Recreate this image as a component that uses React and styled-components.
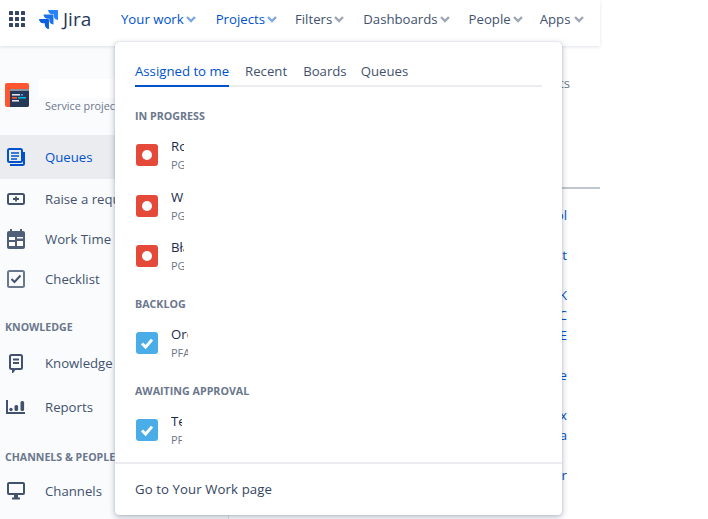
import React from "react";
import styled, { createGlobalStyle } from "styled-components";

const Global = createGlobalStyle`
  html, body { margin: 0; padding: 0; background: #fff; }
  body { font-family: "Open Sans", "Noto Sans", "Liberation Sans", sans-serif; width: 708px; height: 519px; overflow: hidden; }
  * { box-sizing: border-box; }
`;

const Page = styled.div`
  position: relative;
  width: 600px;
  height: 519px;
  display: flex;
  flex-direction: column;
`;
const Header = styled.header`
  height: 46px;
  flex: none;
  display: flex;
  align-items: center;
  padding: 0 0 8px 9px;
  background: #fff;
  box-shadow: 0 1px 3px rgba(9, 30, 66, 0.13);
  position: relative;
  z-index: 1;
`;
const Grid = styled.svg`
  width: 16px;
  height: 16px;
  flex: none;
  color: #344563;
`;
const Brand = styled.div`
  display: flex;
  align-items: center;
  gap: 5px;
  margin-left: 14px;
  width: 82px;
  flex: none;
`;
const BrandMark = styled.svg`
  width: 19px;
  height: 19px;
  flex: none;
`;
const BrandName = styled.span`
  font-size: 19px;
  color: #253858;
`;
const NavItem = styled.div`
  display: flex;
  align-items: center;
  gap: ${(p) => p.$inner || 1}px;
  font-size: 13.2px;
  color: ${(p) => (p.$active ? "#0052CC" : "#42526E")};
  margin-right: ${(p) => p.$gap}px;
  white-space: nowrap;
`;
const Chev = styled.svg`
  width: 12px;
  height: 12px;
  flex: none;
  opacity: 0.5;
`;
const Body = styled.div`
  flex: 1;
  display: flex;
  min-height: 0;
`;
const Sidebar = styled.aside`
  width: 229px;
  flex: none;
  background: #fafbfc;
  border-right: 1px solid #dfe1e6;
  padding-top: 33px;
  display: flex;
  flex-direction: column;
`;
const ProjectHead = styled.div`
  display: flex;
  gap: 4px;
  padding-left: 5px;
  height: 56px;
`;
const ProjectLogo = styled.svg`
  width: 24px;
  height: 24px;
  flex: none;
  margin-top: 4px;
`;
const ProjectTitle = styled.div`
  display: flex;
  flex-direction: column;
  margin-left: 5px;
`;
const Redacted = styled.div`
  width: 77px;
  height: 19px;
  background: #fff;
`;
const ProjectType = styled.div`
  font-size: 10.8px;
  line-height: 16px;
  margin-left: 7px;
  color: #6b778c;
  white-space: nowrap;
`;
const NavRow = styled.div`
  height: ${(p) => p.$h}px;
  flex: none;
  display: flex;
  align-items: center;
  padding-left: 7px;
  gap: 20px;
  font-size: 13.2px;
  white-space: nowrap;
  color: ${(p) => (p.$active ? "#0052CC" : "#42526E")};
  background: ${(p) => (p.$active ? "#EBECF0" : "transparent")};
`;
const NavIcon = styled.svg`
  width: 18px;
  height: 20px;
  flex: none;
`;
const WideNavIcon = styled.svg`
  width: 20px;
  height: 20px;
  flex: none;
  margin: 0 -1px;
`;
const SideHeading = styled.div`
  font-size: 10.6px;
  font-weight: 700;
  color: #6b778c;
  padding-left: 5px;
  line-height: 14px;
  white-space: nowrap;
  margin-top: ${(p) => p.$top}px;
  margin-bottom: ${(p) => p.$bottom}px;
`;
const Main = styled.main`
  flex: 1;
  padding-top: 27px;
  display: flex;
  flex-direction: column;
  position: relative;
`;
const Frag = styled.div`
  width: ${(p) => (p.$muted ? 341 : 338)}px;
  text-align: right;
  font-size: 13.2px;
  line-height: 20px;
  height: 20px;
  color: ${(p) => (p.$muted ? "#6B778C" : "#0052CC")};
  margin-top: ${(p) => p.$top || 0}px;
`;
const Rule = styled.div`
  height: 2px;
  background: #c1c7d0;
  margin-top: 94px;
  margin-bottom: 16px;
`;
const Popover = styled.section`
  position: absolute;
  left: 115px;
  top: 42px;
  width: 447px;
  height: 473px;
  background: #fff;
  border-radius: 4px;
  box-shadow: 0 2px 6px rgba(9, 30, 66, 0.3), 0 0 1px rgba(9, 30, 66, 0.31);
  z-index: 2;
  display: flex;
  flex-direction: column;
`;
const Tabs = styled.nav`
  display: flex;
  margin: 18px 20px 0;
  border-bottom: 2px solid #ebecf0;
  height: 27px;
`;
const Tab = styled.div`
  height: 27px;
  margin-right: ${(p) => p.$gap || 0}px;
  font-size: 13.2px;
  line-height: 22px;
  white-space: nowrap;
  color: ${(p) => (p.$active ? "#0052CC" : "#42526E")};
  border-bottom: 2px solid ${(p) => (p.$active ? "#0052CC" : "transparent")};
`;
const Content = styled.div`
  flex: 1;
  padding: 0 20px;
  min-height: 0;
`;
const Heading = styled.h3`
  margin: ${(p) => p.$top}px 0 ${(p) => p.$bottom}px;
  font-size: 10.7px;
  line-height: 14px;
  font-weight: 700;
  color: #6b778c;
  white-space: nowrap;
`;
const Issue = styled.div`
  height: ${(p) => p.$h || 50.5}px;
  display: flex;
  align-items: center;
  gap: 13px;
  padding-left: 1px;
`;
const Badge = styled.svg`
  width: 22px;
  height: 22px;
  flex: none;
`;
const IssueText = styled.div`
  width: ${(p) => p.$clip}px;
  overflow: hidden;
  white-space: nowrap;
  display: flex;
  flex-direction: column;
`;
const IssueTitle = styled.div`
  font-size: 13.2px;
  line-height: 20px;
  color: #172b4d;
`;
const IssueKey = styled.div`
  font-size: 11px;
  line-height: 18px;
  color: #6b778c;
`;
const Footer = styled.footer`
  height: 53px;
  flex: none;
  border-top: 2px solid #ebecf0;
  display: flex;
  align-items: center;
  padding: 0 0 2px 20px;
  font-size: 13.2px;
  letter-spacing: 0.1px;
  color: #344563;
`;

const Chevron = ({ color = "currentColor" }) => (
  <Chev viewBox="0 0 12 12">
    <path d="M2 4 6 8l4-4" fill="none" stroke={color} strokeWidth="2.4" />
  </Chev>
);
const Stop = () => (
  <Badge viewBox="0 0 22 22">
    <rect width="22" height="22" rx="3" fill="#E5493A" />
    <circle cx="11" cy="11" r="5" fill="#fff" />
  </Badge>
);
const Task = () => (
  <Badge viewBox="0 0 22 22">
    <rect width="22" height="22" rx="3" fill="#4BADE8" />
    <path d="M6 11.5l3.6 3.6L16 7.6" fill="none" stroke="#fff" strokeWidth="3" />
  </Badge>
);

const stroke = { fill: "none", stroke: "#42526E", strokeWidth: 2 };

export default function App() {
  return (
    <>
      <Global />
      <Page>
        <Header>
          <Grid viewBox="0 0 16 16" fill="currentColor">
            {[0, 6, 12].map((y) =>
              [0, 6, 12].map((x) => <rect key={`${x}-${y}`} x={x} y={y} width="4" height="4" rx="0.6" />)
            )}
          </Grid>
          <Brand>
            <BrandMark viewBox="0 0 24 24">
              <path d="M23.013 0H11.455a5.215 5.215 0 0 0 5.215 5.215h2.129v2.057A5.215 5.215 0 0 0 24 12.483V1.005A1.001 1.001 0 0 0 23.013 0Z" fill="#2684FF" />
              <path d="M17.294 5.757H5.736a5.215 5.215 0 0 0 5.215 5.214h2.129v2.058a5.218 5.218 0 0 0 5.215 5.214V6.758a1.001 1.001 0 0 0-1.001-1.001Z" fill="#1A73EC" />
              <path d="M11.571 11.513H0a5.218 5.218 0 0 0 5.232 5.215h2.13v2.057A5.215 5.215 0 0 0 12.575 24V12.518a1.005 1.005 0 0 0-1.005-1.005Z" fill="#0A60DC" />
            </BrandMark>
            <BrandName>Jira</BrandName>
          </Brand>
          <NavItem $active $gap={19}>Your work<Chevron color="#0052CC" /></NavItem>
          <NavItem $active $gap={17}>Projects<Chevron color="#0052CC" /></NavItem>
          <NavItem $gap={18}>Filters<Chevron /></NavItem>
          <NavItem $gap={18}>Dashboards<Chevron /></NavItem>
          <NavItem $gap={16}>People<Chevron /></NavItem>
          <NavItem $gap={0} $inner={3}>Apps<Chevron /></NavItem>
        </Header>
        <Body>
          <Sidebar>
            <ProjectHead>
              <ProjectLogo viewBox="0 0 24 24">
                <rect width="24" height="24" rx="2" fill="#FF5630" />
                <path d="M5 6h19v16a2 2 0 0 1-2 2H5Z" fill="#253858" />
                <rect x="5" y="6" width="19" height="2" fill="#8993A4" />
                <rect x="7" y="11" width="8" height="1.6" fill="#DFE1E6" />
                <rect x="16" y="11" width="2" height="1.6" fill="#4C9AFF" />
                <rect x="7" y="14" width="5" height="1.6" fill="#FF5630" />
                <rect x="13" y="14" width="8" height="1.6" fill="#00B8D9" />
                <rect x="7" y="17" width="7" height="1.6" fill="#DFE1E6" />
              </ProjectLogo>
              <ProjectTitle>
                <Redacted />
                <ProjectType>Service project</ProjectType>
              </ProjectTitle>
            </ProjectHead>
            <NavRow $active $h={44}>
              <NavIcon viewBox="0 0 18 20">
                <rect x="1" y="2" width="14" height="13" rx="1.5" fill="none" stroke="#0052CC" strokeWidth="2" />
                <path d="M4 6h8M4 9h8M4 12h6" stroke="#0052CC" strokeWidth="1.6" />
                <path d="M17 5v11.5a1.5 1.5 0 0 1-1.5 1.5H3" fill="none" stroke="#0052CC" strokeWidth="2" />
              </NavIcon>
              Queues
            </NavRow>
            <NavRow $h={40}>
              <NavIcon viewBox="0 0 18 20">
                <rect x="1" y="5" width="16" height="10" rx="1.5" {...stroke} />
                <path d="M6 10h6M9 7.5v5" stroke="#42526E" strokeWidth="1.8" />
              </NavIcon>
              Raise a request
            </NavRow>
            <NavRow $h={40}>
              <NavIcon viewBox="0 0 18 20">
                <rect x="0" y="2" width="18" height="18" rx="2" fill="#505F79" />
                <path d="M4 0v3M14 0v3" stroke="#505F79" strokeWidth="2" />
                <rect x="2" y="8" width="6" height="3" fill="#fff" />
                <rect x="10" y="8" width="6" height="1.5" fill="#fff" />
                <rect x="2" y="13" width="6" height="4" fill="#fff" />
                <rect x="10" y="12" width="6" height="5" fill="#fff" />
              </NavIcon>
              Work Time Calendar
            </NavRow>
            <NavRow $h={40}>
              <NavIcon viewBox="0 0 18 20">
                <rect x="1" y="2" width="16" height="16" rx="1.5" fill="none" stroke="#6B778C" strokeWidth="2" />
                <path d="M4.5 10l3 3 6-6.5" {...stroke} />
              </NavIcon>
              Checklist
            </NavRow>
            <SideHeading $top={21} $bottom={7}>KNOWLEDGE</SideHeading>
            <NavRow $h={44}>
              <NavIcon viewBox="0 0 18 20">
                <path d="M4.5 2h9a1.5 1.5 0 0 1 1.5 1.5v11a1.5 1.5 0 0 1-1.5 1.5H8l-2 2.5V16H4.5A1.5 1.5 0 0 1 3 14.5v-11A1.5 1.5 0 0 1 4.5 2Z" fill="none" stroke="#42526E" strokeWidth="2" />
                <path d="M6 6.5h6M6 10h6" stroke="#42526E" strokeWidth="2" />
              </NavIcon>
              Knowledge base
            </NavRow>
            <NavRow $h={44}>
              <WideNavIcon viewBox="0 0 20 20">
                <path d="M1 3v13h18" {...stroke} />
                <circle cx="5" cy="12.5" r="1.7" fill="#42526E" />
                <rect x="8.5" y="8" width="3.6" height="6" rx="1.5" fill="#42526E" />
                <rect x="14.5" y="4" width="3.6" height="10" rx="1.5" fill="#42526E" />
              </WideNavIcon>
              Reports
            </NavRow>
            <SideHeading $top={21} $bottom={7}>CHANNELS &amp; PEOPLE</SideHeading>
            <NavRow $h={40}>
              <NavIcon viewBox="0 0 18 20">
                <rect x="1" y="2" width="16" height="11" rx="1" {...stroke} />
                <rect x="7" y="14" width="4" height="3" fill="#42526E" />
                <rect x="5" y="16.5" width="8" height="2" fill="#42526E" />
              </NavIcon>
              Channels
            </NavRow>
          </Sidebar>
          <Main>
            <Frag $muted>Requests</Frag>
            <Rule />
            <Frag>Control</Frag>
            <Frag $top={20}>Request</Frag>
            <Frag $top={20}>TASK</Frag>
            <Frag>PROC</Frag>
            <Frag>LINE</Frag>
            <Frag $top={20}>Store</Frag>
            <Frag $top={20}>Inbox</Frag>
            <Frag>Data</Frag>
            <Frag $top={20}>Order</Frag>
          </Main>
        </Body>
        <Popover>
          <Tabs>
            <Tab $active $gap={16}>Assigned to me</Tab>
            <Tab $gap={16}>Recent</Tab>
            <Tab $gap={14}>Boards</Tab>
            <Tab>Queues</Tab>
          </Tabs>
          <Content>
            <Heading $top={22} $bottom={7}>IN PROGRESS</Heading>
            <Issue><Stop /><IssueText $clip={13}><IssueTitle>Rozwój</IssueTitle><IssueKey>PG-101</IssueKey></IssueText></Issue>
            <Issue><Stop /><IssueText $clip={13}><IssueTitle>Wdrożenie</IssueTitle><IssueKey>PG-102</IssueKey></IssueText></Issue>
            <Issue><Stop /><IssueText $clip={13}><IssueTitle>Błąd</IssueTitle><IssueKey>PG-103</IssueKey></IssueText></Issue>
            <Heading $top={15} $bottom={7}>BACKLOG</Heading>
            <Issue $h={50}><Task /><IssueText $clip={17}><IssueTitle>Order</IssueTitle><IssueKey>PFA-14</IssueKey></IssueText></Issue>
            <Heading $top={16} $bottom={7}>AWAITING APPROVAL</Heading>
            <Issue $h={50}><Task /><IssueText $clip={11}><IssueTitle>Test</IssueTitle><IssueKey>PFA-15</IssueKey></IssueText></Issue>
          </Content>
          <Footer>Go to Your Work page</Footer>
        </Popover>
      </Page>
    </>
  );
}
